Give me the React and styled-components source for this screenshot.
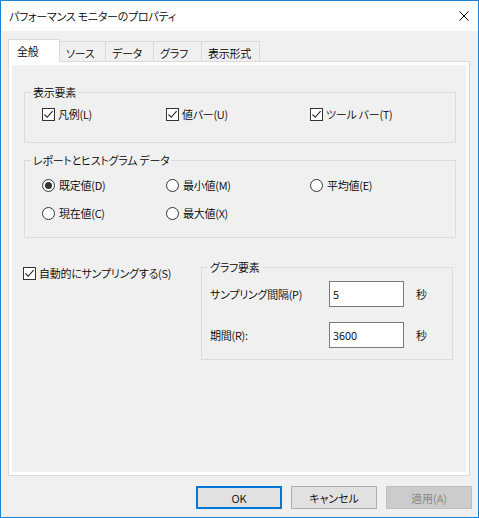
import React from 'react';
import styled, {createGlobalStyle} from "styled-components";

const GlobalStyle = createGlobalStyle`
  html, body {
    margin: 0;
    padding: 0;
    background: #fff;
  }
  body {
    font-family: "Noto Sans CJK JP", "Noto Sans", sans-serif;
    font-size: 11px;
    font-weight: 350;
    letter-spacing: -0.25px;
    color: #000;
    font-feature-settings: "palt";
  }
`;

const CheckMark = () => (
    <svg width="11" height="11" viewBox="0 0 11 11">
        <path d="M1.5 5.5 L4.2 8.3 L9.6 2.2" fill="none" stroke="#222" strokeWidth="1.1"/>
    </svg>
);

const Check = ({label, checked}) => (
    <Option $gap={3}>
        <Box>{checked && <CheckMark/>}</Box>
        <span>{label}</span>
    </Option>
);

const Radio = ({label, checked}) => (
    <Option $gap={4}>
        <Circle $on={checked}/>
        <span>{label}</span>
    </Option>
);

const App = () => {
    const tabs = [
        {name: '全般', w: 52, active: true},
        {name: 'ソース', w: 46},
        {name: 'データ', w: 48},
        {name: 'グラフ', w: 48},
        {name: '表示形式', w: 58},
    ];
    return (<>
        <GlobalStyle/>
        <Window>
            <TitleBar>
                <span>パフォーマンス モニターのプロパティ</span>
                <svg width="10" height="10" viewBox="0 0 10 10">
                    <path d="M0.5 0.5 L9.5 9.5 M9.5 0.5 L0.5 9.5" stroke="#000" strokeWidth="1"/>
                </svg>
            </TitleBar>
            <Body>
                <TabRow>
                    {tabs.map(t => (
                        <Tab key={t.name} $active={t.active} $w={t.w}>{t.name}</Tab>
                    ))}
                </TabRow>
                <Panel>
                    <Page>
                        <Group $w={432} $pad="6px 0 20px 17px">
                            <Legend $ml={-11}>表示要素</Legend>
                            <Columns>
                                <Check label="凡例(L)" checked/>
                                <Check label="値バー(U)" checked/>
                                <Check label="ツール バー(T)" checked/>
                            </Columns>
                        </Group>
                        <Group $w={432} $pad="9px 0 16px 17px" $mt={9}>
                            <Legend $ml={-11}>レポートとヒストグラム データ</Legend>
                            <Columns>
                                <Radio label="既定値(D)" checked/>
                                <Radio label="最小値(M)"/>
                                <Radio label="平均値(E)"/>
                                <Radio label="現在値(C)"/>
                                <Radio label="最大値(X)"/>
                            </Columns>
                        </Group>
                        <Lower>
                            <AutoSample>
                                <Check label="自動的にサンプリングする(S)" checked/>
                            </AutoSample>
                            <Group $w={252} $pad="6px 0 11px 8px">
                                <Legend $ml={-2}>グラフ要素</Legend>
                                <Fields>
                                    <span>サンプリング間隔(P)</span>
                                    <Input defaultValue="5"/>
                                    <span>秒</span>
                                    <span>期間(R):</span>
                                    <Input defaultValue="3600"/>
                                    <span>秒</span>
                                </Fields>
                            </Group>
                        </Lower>
                    </Page>
                </Panel>
                <Footer>
                    <Button $variant="default">OK</Button>
                    <Button>キャンセル</Button>
                    <Button $variant="disabled">適用(A)</Button>
                </Footer>
            </Body>
        </Window>
    </>);
};

const Window = styled.div`
  width: 479px;
  height: 518px;
  box-sizing: border-box;
  border: 1px solid #1883d7;
  background: #f0f0f0;
  display: flex;
  flex-direction: column;
`;

const TitleBar = styled.div`
  height: 30px;
  flex: none;
  background: #fff;
  display: flex;
  align-items: center;
  justify-content: space-between;
  padding: 0 9px 0 8px;
  line-height: 16px;

  svg {
    display: block;
  }
`;

const Body = styled.div`
  flex: 1;
  display: flex;
  flex-direction: column;
  padding: 8px 6px 8px 7px;
  min-height: 0;
`;

const TabRow = styled.div`
  display: flex;
  align-items: flex-end;
  height: 23px;
  margin-bottom: -1px;
  position: relative;
  z-index: 1;
`;

const Tab = styled.div`
  box-sizing: border-box;
  width: ${p => p.$w}px;
  height: ${p => p.$active ? 23 : 20}px;
  margin-bottom: ${p => p.$active ? 0 : 1}px;
  padding-left: ${p => p.$active ? 8 : 6}px;
  padding-top: 3px;
  line-height: 16px;
  background: ${p => p.$active ? '#fff' : '#f0f0f0'};
  border: 1px solid #d9d9d9;
  border-bottom: none;
  border-left: ${p => p.$active ? '1px solid #d9d9d9' : 'none'};
  white-space: nowrap;
`;

const Panel = styled.div`
  flex: 1;
  margin-right: 2px;
  border: 1px solid #d9d9d9;
  background: #fff;
  padding: 3px;
  display: flex;
`;

const Page = styled.div`
  flex: 1;
  background: #f0f0f0;
  padding: 19px 0 0 12px;
`;

const Group = styled.fieldset`
  box-sizing: border-box;
  width: ${p => p.$w}px;
  margin: ${p => p.$mt || 0}px 0 0 0;
  padding: ${p => p.$pad};
  border: 1px solid #dcdcdc;
  min-width: 0;
`;

const Legend = styled.legend`
  margin-left: ${p => p.$ml}px;
  padding: 0 2px;
  line-height: 16px;
`;

const Columns = styled.div`
  display: grid;
  grid-template-columns: 124px 144px 1fr;
  row-gap: 12px;
`;

const Option = styled.label`
  display: flex;
  align-items: center;
  gap: ${p => p.$gap}px;
  height: 16px;
  line-height: 16px;
  white-space: nowrap;
`;

const Box = styled.span`
  box-sizing: border-box;
  width: 13px;
  height: 13px;
  border: 1px solid #333;
  background: #fff;
  display: flex;
  align-items: center;
  justify-content: center;
  flex: none;
`;

const Circle = styled.span`
  box-sizing: border-box;
  width: 13px;
  height: 13px;
  border-radius: 50%;
  border: 1px solid #333;
  background: #fff;
  display: flex;
  align-items: center;
  justify-content: center;
  flex: none;

  &::after {
    content: "";
    display: ${p => p.$on ? 'block' : 'none'};
    width: 7px;
    height: 7px;
    border-radius: 50%;
    background: #333;
  }
`;

const Lower = styled.div`
  display: flex;
  align-items: flex-start;
  margin-top: 21px;
`;

const AutoSample = styled.div`
  width: 178px;
  margin: 6px 0 0 -1px;
`;

const Fields = styled.div`
  display: grid;
  grid-template-columns: 119px 75px auto;
  row-gap: 15px;
  align-items: center;
  line-height: 16px;

  > span:nth-child(3n) {
    padding-left: 12px;
  }
`;

const Input = styled.input`
  box-sizing: border-box;
  width: 75px;
  height: 26px;
  border: 1px solid #7a7a7a;
  background: #fff;
  padding: 0 3px;
  margin: 0;
  font: inherit;
  color: #000;
  outline: none;
`;

const Footer = styled.div`
  display: flex;
  justify-content: flex-end;
  gap: 9px;
  margin-top: 10px;
`;

const Button = styled.button`
  box-sizing: border-box;
  width: 86px;
  height: 23px;
  margin: 0;
  padding: 0;
  font: inherit;
  line-height: 16px;
  background: ${p => p.$variant === 'disabled' ? '#cccccc' : '#e1e1e1'};
  color: ${p => p.$variant === 'disabled' ? '#838383' : '#000'};
  border: ${p => p.$variant === 'default' ? '2px solid #0078d7'
          : p.$variant === 'disabled' ? '1px solid #bfbfbf' : '1px solid #adadad'};
`;

export default App;
